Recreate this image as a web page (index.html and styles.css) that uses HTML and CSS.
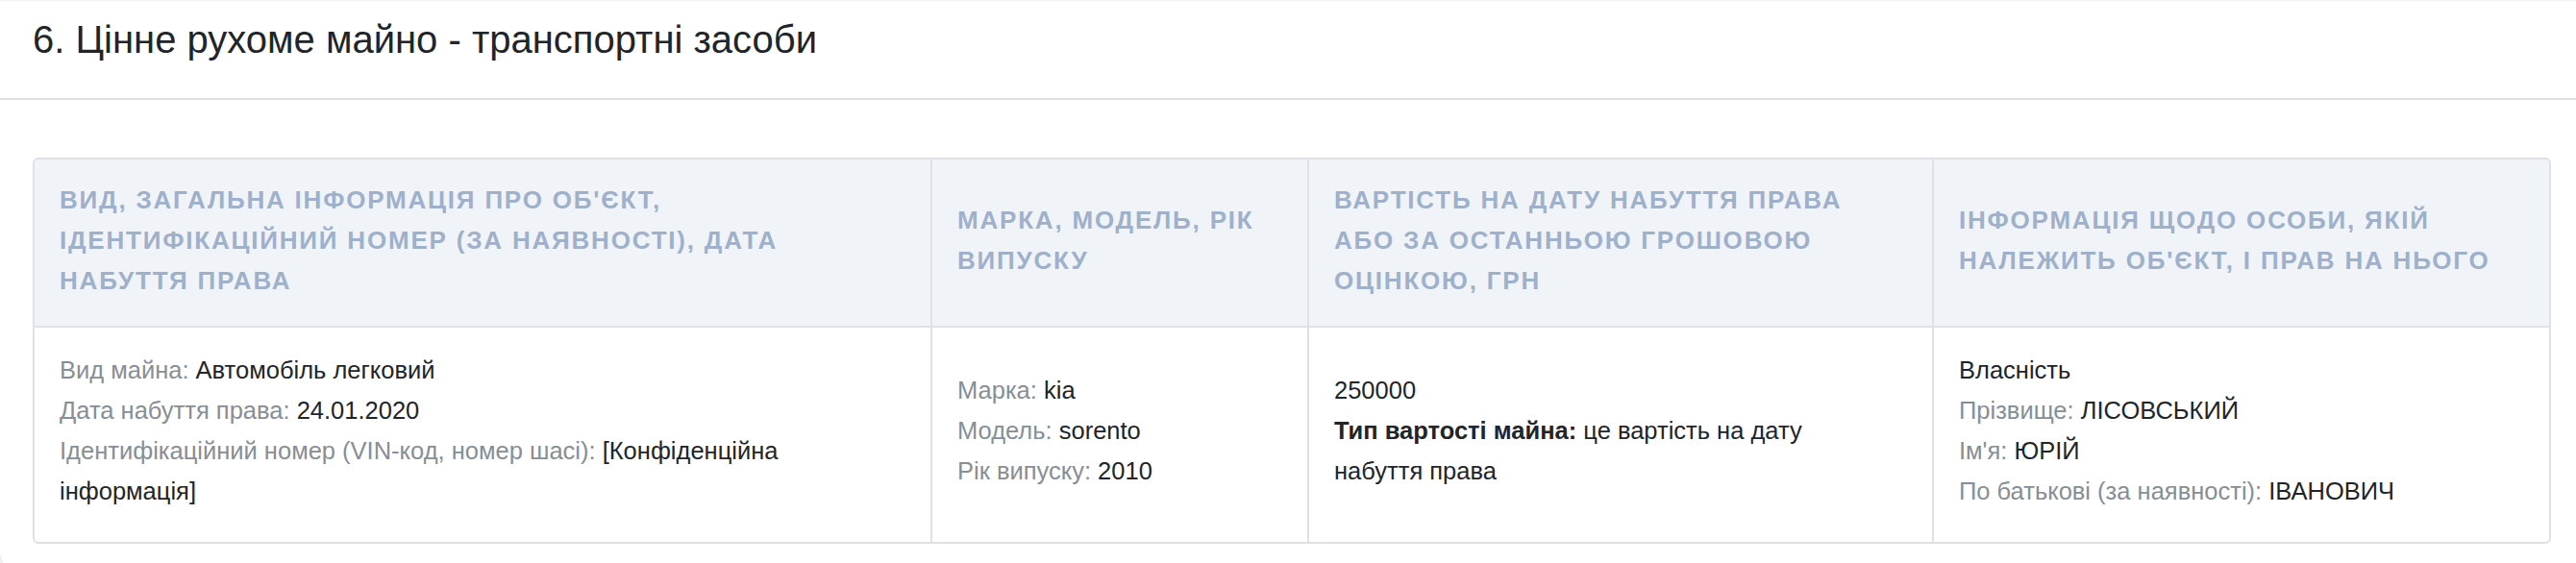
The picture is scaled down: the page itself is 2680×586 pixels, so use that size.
FILE: index.html
```html
<!DOCTYPE html>
<html lang="uk">
<head>
    <meta charset="UTF-8">
    <meta name="viewport" content="width=device-width, initial-scale=1.0">
    <title>Цінне рухоме майно</title>
    <link rel="stylesheet" href="styles.css">
</head>
<body>
    <div class="card">
        <div class="card-header">
            <h5 class="card-title">6. Цінне рухоме майно - транспортні засоби</h5>
        </div>
        <div class="card-body">
            <div class="table-wrap">
                <table class="assets">
                    <colgroup>
                        <col class="col-info">
                        <col class="col-brand">
                        <col class="col-cost">
                        <col class="col-owner">
                    </colgroup>
                    <thead>
                        <tr>
                            <th>Вид, загальна інформація про об'єкт, ідентифікаційний номер (за наявності), дата набуття права</th>
                            <th>Марка, модель, рік випуску</th>
                            <th>Вартість на дату набуття права або за останньою грошовою оцінкою, грн</th>
                            <th class="last">Інформація щодо особи, якій належить об'єкт, і прав на нього</th>
                        </tr>
                    </thead>
                    <tbody>
                        <tr>
                            <td>
                                <div><span class="label">Вид майна:</span> Автомобіль легковий</div>
                                <div><span class="label">Дата набуття права:</span> 24.01.2020</div>
                                <div><span class="label">Ідентифікаційний номер (VIN-код, номер шасі):</span> [Конфіденційна інформація]</div>
                            </td>
                            <td>
                                <div><span class="label">Марка:</span> kia</div>
                                <div><span class="label">Модель:</span> sorento</div>
                                <div><span class="label">Рік випуску:</span> 2010</div>
                            </td>
                            <td class="cost">
                                <div>250000</div>
                                <div><b>Тип вартості майна:</b> це вартість на дату набуття права</div>
                            </td>
                            <td class="last">
                                <div>Власність</div>
                                <div><span class="label">Прізвище:</span> ЛІСОВСЬКИЙ</div>
                                <div><span class="label">Ім'я:</span> ЮРІЙ</div>
                                <div><span class="label">По батькові (за наявності):</span> ІВАНОВИЧ</div>
                            </td>
                        </tr>
                    </tbody>
                </table>
            </div>
        </div>
    </div>
</body>
</html>
```

FILE: styles.css
```css
body {
    margin: 0;
    background: #fff;
    font-family: "Liberation Sans", Arial, sans-serif;
    color: #212529;
    overflow: hidden;
}

.card {
    width: calc(100% + 40px);
    margin-left: -1px;
    min-height: 596px;
    box-sizing: border-box;
    border: 1px solid #e4e4e4;
    border-top-color: #f3f3f3;
    border-radius: 0 0 22px 22px;
    box-shadow: 0 1px 4px rgba(0,0,0,0.08);
    background: #fff;
}

.card-header {
    height: 103px;
    box-sizing: border-box;
    padding: 16px 34px 0;
    border-bottom: 2px solid #e0e0e0;
}

.card-title {
    margin: 0;
    font-size: 40px;
    font-weight: normal;
    line-height: 49px;
    color: #212529;
}

.card-body {
    padding: 60px 0 30px 34px;
}

.table-wrap {
    width: 2620px;
    box-sizing: border-box;
    border: 2px solid #dee2e6;
    border-radius: 6px;
    overflow: hidden;
}

.assets {
    width: 100%;
    table-layout: fixed;
    border-collapse: separate;
    border-spacing: 0;
}

.col-info { width: 934px; }
.col-brand { width: 392px; }
.col-cost { width: 650px; }
.col-owner { width: 640px; }

.assets th,
.assets td {
    border-right: 2px solid #dee2e6;
    text-align: left;
    vertical-align: middle;
    line-height: 42px;
}

.assets th.last,
.assets td.last {
    border-right: none;
}

.assets th {
    padding: 21px 26px 26px;
    background: #f0f4f8;
    border-bottom: 2px solid #dee2e6;
    color: #9fb0cb;
    font-size: 26px;
    font-weight: bold;
    letter-spacing: 1.8px;
    text-transform: uppercase;
}

.assets td {
    padding: 23px 26px 32px;
    font-size: 25.5px;
    color: #212529;
}

.assets td.cost {
    padding-right: 40px;
}

.assets td b {
    font-weight: bold;
}

.label {
    color: #868e96;
}
```
